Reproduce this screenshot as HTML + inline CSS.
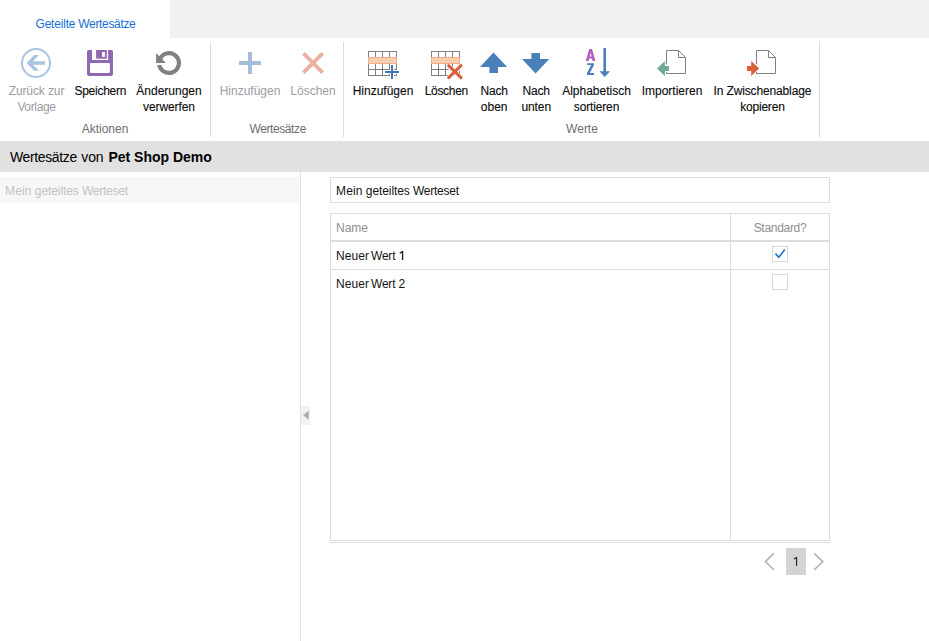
<!DOCTYPE html>
<html lang="de">
<head>
<meta charset="utf-8">
<title>Geteilte Wertesätze</title>
<style>
*{box-sizing:border-box;margin:0;padding:0}
html,body{width:929px;height:641px;overflow:hidden;background:#fff}
body{font-family:"Liberation Sans",sans-serif;font-size:12px;color:#1e1e1e;position:relative}
.abs{position:absolute}
#tabstrip{left:170px;top:0;width:759px;height:38px;background:#f0f1f3}
#tab{left:0;top:0;width:170px;height:38px;background:#fff}
#tabtxt{left:35.5px;top:16px;color:#1570d2;font-size:12px;line-height:16px;white-space:nowrap;letter-spacing:-0.33px}
.sep{width:1px;top:42px;height:95px;background:#dbdbdb}
.btn{top:83px;width:120px;margin-left:-60px;text-align:center;font-size:12px;line-height:16px;color:#0c0c0c;white-space:nowrap;-webkit-text-stroke:0.12px #0c0c0c}
.btn.dis{color:#9c9ca2;-webkit-text-stroke:0}
.grp{top:121px;width:120px;margin-left:-60px;text-align:center;font-size:12px;line-height:16px;color:#6e6e6e;white-space:nowrap}
.ico{position:absolute;left:0;top:0;overflow:visible}
#hdr{left:0;top:141px;width:929px;height:31px;background:#e1e1e1}
#hdrtxt{left:10px;top:148px;font-size:14px;line-height:18px;color:#000;white-space:nowrap}
#hdrtxt b{font-weight:bold}
#item{left:0;top:177px;width:300px;height:26px;background:#f7f7f7}
#itemtxt{left:5px;top:183px;font-size:12px;line-height:16px;color:#c2c2c2;white-space:nowrap;letter-spacing:-0.1px}
#split{left:300px;top:172px;width:1px;height:469px;background:#e2e2e2}
#handle{left:301px;top:406px;width:9px;height:19px;background:#f0f1f3}
#inp{left:330px;top:177px;width:500px;height:26px;border:1px solid #dcdcdc;background:#fff}
#inptxt{left:336px;top:183px;font-size:12px;line-height:16px;color:#141414;white-space:nowrap;letter-spacing:-0.1px}
#tbl{left:330px;top:213px;width:500px;height:328px;border:1px solid #dcdcdc;background:#fff}
#colsep{left:730px;top:214px;width:1px;height:326px;background:#dcdcdc}
#hline{left:331px;top:240px;width:498px;height:2px;background:#dcdcdc}
#rline{left:331px;top:269px;width:498px;height:1px;background:#dcdcdc}
#pline{left:330px;top:542px;width:500px;height:1px;background:#dcdcdc}
.cell{font-size:12px;line-height:16px;white-space:nowrap}
.cb{width:16px;height:16px;border:1px solid #d9d9d9;background:#fff}
#pg{left:786px;top:548px;width:20px;height:27px;background:#d3d3d3;text-align:center;font-size:12px;line-height:29px;color:#222}
</style>
</head>
<body>
<div class="abs" id="tab"></div>
<div class="abs" id="tabstrip"></div>
<div class="abs" id="tabtxt"><span style="letter-spacing:-0.2px">Geteilte</span> Wertesätze</div>

<div class="abs sep" style="left:210px"></div>
<div class="abs sep" style="left:343px"></div>
<div class="abs sep" style="left:819px"></div>

<svg class="ico" width="929" height="141" viewBox="0 0 929 141">
  <!-- back (disabled) -->
  <circle cx="36" cy="63" r="14" fill="none" stroke="#aac3df" stroke-width="2"/>
  <path d="M26.5 62.95 L34.2 55.1 L39 55.1 L33 61.2 L44.9 61.2 L44.9 64.7 L33 64.7 L39 70.8 L34.2 70.8 Z" fill="#aac3df"/>
  <!-- save -->
  <rect x="87" y="50" width="26" height="26" rx="2" fill="#9068b0"/>
  <rect x="92" y="49" width="16.1" height="11" fill="#fff"/>
  <rect x="96.1" y="50" width="10.7" height="8.7" fill="#9068b0"/>
  <rect x="102.1" y="52" width="2.8" height="4.9" fill="#fff"/>
  <rect x="90" y="63.1" width="19.9" height="9.9" rx="1" fill="#fff"/>
  <!-- undo -->
  <path d="M159.1 63 A9.9 9.9 0 1 0 160.03 58.82" fill="none" stroke="#808080" stroke-width="4.2"/>
  <rect x="155" y="63" width="8" height="2" fill="#fff"/>
  <path d="M156.1 53 L156.1 63 L165.9 63 Z" fill="#808080"/>
  <!-- plus (disabled) -->
  <rect x="239" y="61" width="22" height="4" fill="#a4bddb"/>
  <rect x="248" y="52" width="4" height="22" fill="#a4bddb"/>
  <!-- x (disabled) -->
  <path d="M303.4 53.4 L322.6 72.6 M322.6 53.4 L303.4 72.6" stroke="#edb1a1" stroke-width="4" fill="none"/>
  <!-- table add -->
  <g id="grid1">
    <rect x="368.5" y="51.5" width="28" height="24" fill="#fff" stroke="#808080" stroke-width="1"/>
    <path d="M375.5 51.5V75.5M382.5 51.5V75.5M389.5 51.5V75.5M368.5 57.5H396.5M368.5 63.5H396.5M368.5 69.5H396.5" stroke="#808080" stroke-width="1" fill="none"/>
    <rect x="368.5" y="57.5" width="28" height="6" fill="#f9cdb0" stroke="#f4b08a" stroke-width="1"/>
  </g>
  <path d="M384 72 H400 M392 64 V80" stroke="#fff" stroke-width="4" fill="none"/>
  <path d="M385 72 H399 M392 65 V79" stroke="#3f75b5" stroke-width="2" fill="none"/>
  <!-- table delete -->
  <g>
    <rect x="431.5" y="51.5" width="28" height="24" fill="#fff" stroke="#808080" stroke-width="1"/>
    <path d="M438.5 51.5V75.5M445.5 51.5V75.5M452.5 51.5V75.5M431.5 57.5H459.5M431.5 63.5H459.5M431.5 69.5H459.5" stroke="#808080" stroke-width="1" fill="none"/>
    <rect x="431.5" y="57.5" width="28" height="6" fill="#f9cdb0" stroke="#f4b08a" stroke-width="1"/>
  </g>
  <path d="M448 65.5 L461.5 78.5 M461.5 65.5 L448 78.5" stroke="#fff" stroke-width="5" fill="none"/>
  <path d="M448.7 65.6 L461 77.7 M461 65.6 L448.7 77.7" stroke="#d9603b" stroke-width="3.1" stroke-linecap="round" fill="none"/>
  <!-- up -->
  <path d="M493.5 52.5 L507.2 67 L498 67 L498 73 L489.4 73 L489.4 67 L480 67 Z" fill="#4a80ba"/>
  <!-- down -->
  <path d="M535.6 73.5 L549.2 59 L540 59 L540 53 L531.4 53 L531.4 59 L522 59 Z" fill="#4a80ba"/>
  <!-- AZ sort -->
  <path d="M585.8 60.9 L589.2 49 L592.1 49 L595.4 60.9 L592.6 60.9 L592 58.5 L589.2 58.5 L588.6 60.9 Z M589.75 56.4 L591.55 56.4 L590.65 52.4 Z" fill="#b060c0" fill-rule="evenodd"/>
  <path d="M587.2 63.2 L594 63.2 L594 65 L589.9 73 L594 73 L594 74.9 L587 74.9 L587 73.1 L591.2 65.1 L587.2 65.1 Z" fill="#4a80ba"/>
  <path d="M603.4 48 H606 V71.3 H610 L604.7 77 L599.4 71.3 H603.4 Z" fill="#4a80ba"/>
  <!-- import -->
  <path d="M666.5 64.5 V50.5 H678.5 L685.5 57.5 V73.5 H666.5 V72" fill="none" stroke="#808080" stroke-width="1"/>
  <path d="M678.5 50.5 V57.5 H685.5" fill="none" stroke="#808080" stroke-width="1"/>
  <path d="M657 68.5 L664.9 60.9 L664.9 66 L668.9 66 L668.9 71 L664.9 71 L664.9 76.1 Z" fill="#71a893"/>
  <!-- copy -->
  <path d="M756.5 64.3 V50.5 H768.5 L775.5 57.5 V73.5 H756.5 V72" fill="none" stroke="#808080" stroke-width="1"/>
  <path d="M768.5 50.5 V57.5 H775.5" fill="none" stroke="#808080" stroke-width="1"/>
  <path d="M759.1 68.5 L751.2 60.9 L751.2 66 L747 66 L747 71 L751.2 71 L751.2 76.1 Z" fill="#d9603b"/>
</svg>

<div class="abs btn dis" style="left:36.5px"><span style="letter-spacing:-0.1px">Zurück zur</span><br><span style="letter-spacing:-0.35px">Vorlage</span></div>
<div class="abs btn" style="left:100.3px"><span style="letter-spacing:-0.27px">Speichern</span></div>
<div class="abs btn" style="left:169px">Änderungen<br><span style="letter-spacing:-0.1px">verwerfen</span></div>
<div class="abs btn dis" style="left:250px">Hinzufügen</div>
<div class="abs btn dis" style="left:313px">Löschen</div>
<div class="abs btn" style="left:383px">Hinzufügen</div>
<div class="abs btn" style="left:446.3px"><span style="letter-spacing:-0.3px">Löschen</span></div>
<div class="abs btn" style="left:494.2px"><span style="letter-spacing:-0.2px">Nach</span><br>oben</div>
<div class="abs btn" style="left:536.2px"><span style="letter-spacing:-0.2px">Nach</span><br><span style="letter-spacing:-0.1px">unten</span></div>
<div class="abs btn" style="left:596.5px">Alphabetisch<br><span style="letter-spacing:-0.15px">sortieren</span></div>
<div class="abs btn" style="left:672px">Importieren</div>
<div class="abs btn" style="left:762.4px"><span style="letter-spacing:-0.14px">In Zwischenablage</span><br><span style="letter-spacing:-0.2px">kopieren</span></div>

<div class="abs grp" style="left:105px">Aktionen</div>
<div class="abs grp" style="left:277.7px"><span style="letter-spacing:-0.4px">Wertesätze</span></div>
<div class="abs grp" style="left:582px">Werte</div>

<div class="abs" id="hdr"></div>
<div class="abs" id="hdrtxt"><span style="letter-spacing:-0.37px">Wertesätze</span><span style="letter-spacing:-0.17px;margin-left:0.75px"> von </span><b style="margin-left:1.25px">Pet Shop Demo</b></div>

<div class="abs" id="item"></div>
<div class="abs" id="itemtxt"><span style="letter-spacing:0.15px">Mein</span> geteiltes <span style="letter-spacing:-0.22px">Werteset</span></div>
<div class="abs" id="split"></div>
<div class="abs" id="handle"></div>

<div class="abs" id="inp"></div>
<div class="abs" id="inptxt"><span style="letter-spacing:0.15px">Mein</span> geteiltes <span style="letter-spacing:-0.22px">Werteset</span></div>

<div class="abs" id="tbl"></div>
<div class="abs" id="colsep"></div>
<div class="abs" id="hline"></div>
<div class="abs" id="rline"></div>
<div class="abs" id="pline"></div>
<div class="abs cell" style="left:336px;top:220px;color:#8e8e8e">Name</div>
<div class="abs cell" style="left:731px;top:220px;width:98px;text-align:center;color:#8e8e8e;letter-spacing:-0.3px">Standard?</div>
<div class="abs cell" style="left:336px;top:248px;color:#141414;letter-spacing:-0.22px"><span style="letter-spacing:0.1px">Neuer</span><span style="letter-spacing:-1.5px"> </span>Wert</div>
<div class="abs cell" style="left:336px;top:276px;color:#141414;letter-spacing:-0.22px"><span style="letter-spacing:0.1px">Neuer</span><span style="letter-spacing:-1.5px"> </span>Wert 2</div>
<div class="abs cb" style="left:772px;top:246px"></div>
<div class="abs cb" style="left:772px;top:274px"></div>
<div class="abs" id="pg"></div>
<svg class="ico" width="929" height="641" viewBox="0 0 929 641" style="pointer-events:none">
  <path d="M303.2 415.2 L308.6 410.8 L308.6 419.6 Z" fill="#a8a8a8"/>
  <path d="M773.8 553.4 L765.4 561.6 L773.8 569.8" fill="none" stroke="#b4b4b4" stroke-width="1.6"/>
  <path d="M814.2 553.4 L822.8 561.6 L814.2 569.8" fill="none" stroke="#b4b4b4" stroke-width="1.6"/>
  <path d="M775.4 253.6 L778.8 257.2 L784.8 249.6" fill="none" stroke="#1b73cc" stroke-width="1.6"/>
  <path d="M796.55 557 V566 M796.9 557.3 L794 559.1" fill="none" stroke="#262626" stroke-width="1.15"/>
  <path d="M402.55 251.1 V259.9 M402.9 251.4 L399.8 253.3" fill="none" stroke="#1a1a1a" stroke-width="1.3"/>
</svg>
</body>
</html>
